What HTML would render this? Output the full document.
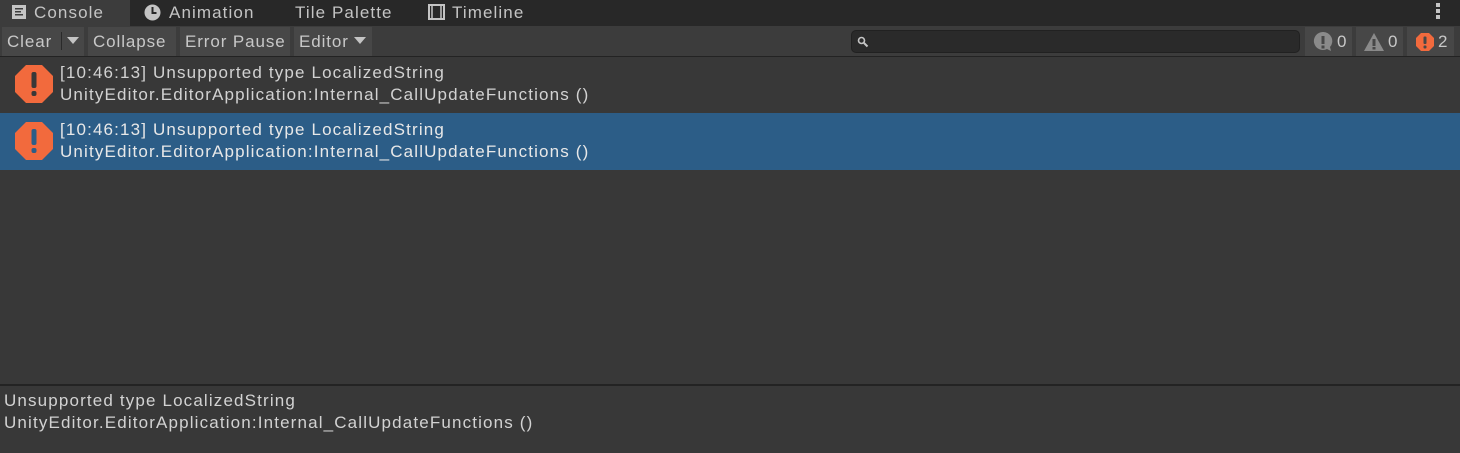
<!DOCTYPE html>
<html><head><style>
*{margin:0;padding:0;box-sizing:border-box}
body{width:1460px;height:453px;background:#383838;font-family:"Liberation Sans",sans-serif;color:#c4c4c4;position:relative;overflow:hidden;font-size:16px}
.abs{position:absolute;white-space:nowrap}
.tabs{left:0;top:0;width:1460px;height:26px;background:#282828}
.tab{top:0;height:26px;line-height:25px;font-size:17px;color:#c4c4c4;letter-spacing:1.1px}
.tb{left:0;top:26px;width:1460px;height:31px;background:#3c3c3c;border-bottom:1px solid #232323}
.btn{top:27px;height:29px;line-height:29px;background:#474747;color:#c8c8c8;font-size:17px;padding-left:5px;letter-spacing:0.9px}
.row{left:0;width:1460px;height:57px}
.t1{left:60px;font-size:17px;color:#d2d2d2;letter-spacing:1.15px}
.err{width:40px;height:40px}
</style></head><body>
<div class="abs tabs"></div>
<div class="abs" style="left:0;top:0;width:130px;height:26px;background:#3c3c3c"></div>
<svg class="abs" style="left:11px;top:4px" width="16" height="16"><rect x="1" y="1" width="14" height="14" fill="#c4c4c4"/><rect x="4" y="4" width="8" height="1.5" fill="#3c3c3c"/><rect x="4" y="7" width="6" height="1.5" fill="#3c3c3c"/><rect x="4" y="10" width="8" height="1.5" fill="#3c3c3c"/></svg>
<div class="abs tab" style="left:34px">Console</div>
<svg class="abs" style="left:144px;top:4px" width="17" height="17"><circle cx="8.5" cy="8.5" r="8" fill="#c4c4c4"/><path d="M8.5 3v6h4" stroke="#282828" stroke-width="2" fill="none"/></svg>
<div class="abs tab" style="left:169px">Animation</div>
<div class="abs tab" style="left:295px">Tile Palette</div>
<svg class="abs" style="left:428px;top:4px" width="17" height="16"><rect x="1" y="1" width="15" height="14" fill="none" stroke="#c4c4c4" stroke-width="2"/><rect x="4" y="1" width="9" height="14" fill="none" stroke="#c4c4c4" stroke-width="1.5"/></svg>
<div class="abs tab" style="left:452px">Timeline</div>
<div class="abs" style="left:1436px;top:3px;width:4px;height:4px;background:#c4c4c4;box-shadow:0 6px 0 #c4c4c4,0 12px 0 #c4c4c4"></div>
<div class="abs tb"></div>
<div class="abs btn" style="left:2px;width:82px">Clear</div>
<div class="abs" style="left:61px;top:32px;width:1px;height:18px;background:#2a2a2a"></div>
<svg class="abs" style="left:67px;top:37px" width="12" height="8"><path d="M0 0h12L6 7z" fill="#c4c4c4"/></svg>
<div class="abs btn" style="left:88px;width:88px">Collapse</div>
<div class="abs btn" style="left:180px;width:110px">Error Pause</div>
<div class="abs btn" style="left:294px;width:78px">Editor</div>
<svg class="abs" style="left:354px;top:37px" width="12" height="8"><path d="M0 0h12L6 7z" fill="#c4c4c4"/></svg>
<div class="abs" style="left:851px;top:30px;width:449px;height:23px;background:#2a2a2a;border:1px solid #212121;border-radius:5px"></div>
<svg class="abs" style="left:857px;top:36px" width="12" height="12"><circle cx="4.5" cy="4.5" r="3" stroke="#c4c4c4" stroke-width="1.6" fill="none"/><path d="M7 7l3.5 3.5" stroke="#c4c4c4" stroke-width="2"/></svg>
<div class="abs btn" style="left:1305px;width:47px;padding:0"></div>
<svg class="abs" style="left:1312px;top:31px" width="22" height="22"><path d="M11 1a9 9 0 1 0 4 17l4 2-1-4A9 9 0 0 0 11 1z" fill="#8a8a8a"/><rect x="9.5" y="5" width="3" height="8" fill="#474747"/><rect x="9.5" y="14.5" width="3" height="3" fill="#474747"/></svg>
<div class="abs" style="left:1337px;top:27px;line-height:29px;font-size:17px;color:#c8c8c8">0</div>
<div class="abs btn" style="left:1356px;width:47px;padding:0"></div>
<svg class="abs" style="left:1363px;top:31px" width="22" height="22"><path d="M11 2L21 20H1z" fill="#8a8a8a"/><rect x="9.5" y="8" width="3" height="7" fill="#474747"/><rect x="9.5" y="16" width="3" height="2.5" fill="#474747"/></svg>
<div class="abs" style="left:1388px;top:27px;line-height:29px;font-size:17px;color:#c8c8c8">0</div>
<div class="abs btn" style="left:1407px;width:47px;padding:0"></div>
<svg class="abs" style="left:1415px;top:32px" width="20" height="20"><path d="M6 1h8l5 5v8l-5 5H6l-5-5V6z" fill="#f26a3d"/><rect x="8.5" y="4.5" width="3" height="7.5" rx="1" fill="#474747"/><rect x="8.5" y="13.5" width="3" height="3" rx="1" fill="#474747"/></svg>
<div class="abs" style="left:1438px;top:27px;line-height:29px;font-size:17px;color:#c8c8c8">2</div>

<div class="abs row" style="top:57px;background:#383838"></div>
<svg class="abs err" style="left:14px;top:64px" viewBox="0 0 40 40"><path d="M12 1h16l11 11v16L28 39H12L1 28V12z" fill="#f26a3d"/><rect x="17.5" y="8" width="5" height="16" rx="2" fill="#383838"/><rect x="17.5" y="27" width="5" height="5" rx="2" fill="#383838"/></svg>
<div class="abs t1" style="top:63px">[10:46:13] Unsupported type LocalizedString</div>
<div class="abs t1" style="top:85px">UnityEditor.EditorApplication:Internal_CallUpdateFunctions ()</div>
<div class="abs row" style="top:113px;background:#2c5d87"></div>
<svg class="abs err" style="left:14px;top:121px" viewBox="0 0 40 40"><path d="M12 1h16l11 11v16L28 39H12L1 28V12z" fill="#f26a3d"/><rect x="17.5" y="8" width="5" height="16" rx="2" fill="#2c5d87"/><rect x="17.5" y="27" width="5" height="5" rx="2" fill="#2c5d87"/></svg>
<div class="abs t1" style="top:120px;color:#e8e8e8">[10:46:13] Unsupported type LocalizedString</div>
<div class="abs t1" style="top:142px;color:#e8e8e8">UnityEditor.EditorApplication:Internal_CallUpdateFunctions ()</div>
<div class="abs" style="left:0;top:384px;width:1460px;height:2px;background:#232323"></div>
<div class="abs t1" style="left:4px;top:391px">Unsupported type LocalizedString</div>
<div class="abs t1" style="left:4px;top:413px">UnityEditor.EditorApplication:Internal_CallUpdateFunctions ()</div>
</body></html>
